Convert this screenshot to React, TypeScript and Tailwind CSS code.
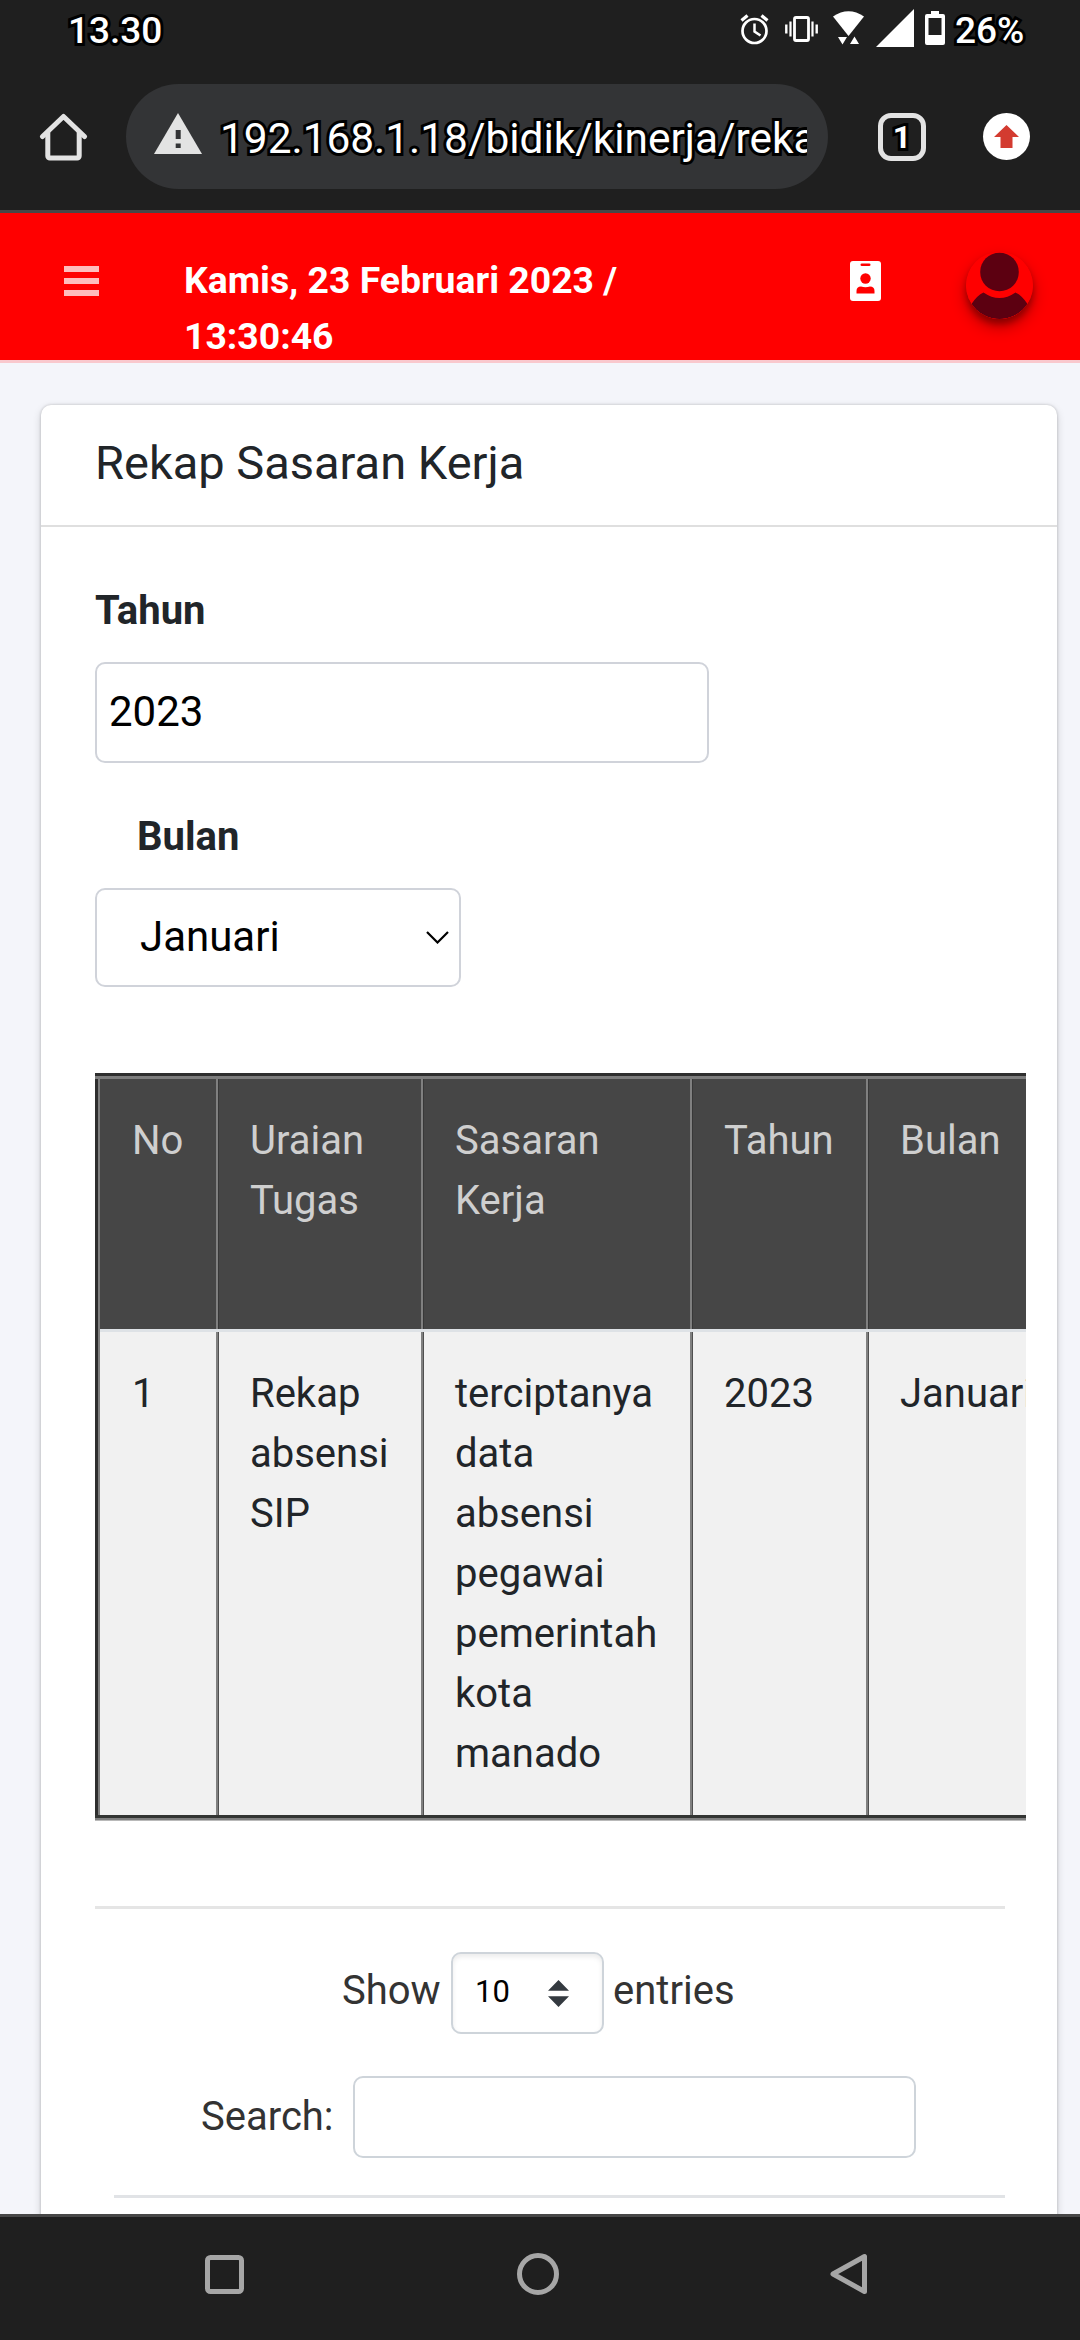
import React from "react";

const outlined =
  "text-white [-webkit-text-stroke:6px_#000] [paint-order:stroke_fill]";

function StatusBar() {
  return (
    <div className="flex h-[60px] items-start justify-between pl-[68px] pr-[56px]">
      <span className={`mt-[10px] text-[37px] leading-[42px] font-medium ${outlined}`}>13.30</span>
      <div className="flex items-start">
        <svg className="mt-[14px] mr-[16px] h-[31px] w-[29px]" viewBox="0 0 29 31" fill="none" stroke="#fff">
          <circle cx="14.5" cy="17" r="12" strokeWidth="2.7" />
          <path d="M14.5 9.5v8l6 4" strokeWidth="2.5" />
          <path d="M1.5 6.5l6-5M27.5 6.5l-6-5" strokeWidth="3.2" />
        </svg>
        <svg className="mt-[15px] mr-[15px] h-[28px] w-[33px]" viewBox="0 0 33 28" fill="none" stroke="#fff">
          <rect x="9.5" y="2.5" width="14" height="23" rx="1.5" strokeWidth="2.8" />
          <path d="M1.3 9.5v9M31.7 9.5v9" strokeWidth="2.4" />
          <path d="M5.5 6.5v15M27.5 6.5v15" strokeWidth="2.2" />
        </svg>
        <svg className="mt-[11px] mr-[12px] h-[34px] w-[31px]" viewBox="0 0 31 34" fill="#fff">
          <path d="M0 5.5Q15.5-5 31 5.500L15.500 25z" />
          <path d="M5 26h9l-4.500 7.500zM17 33h9l-4.500-7.500z" />
        </svg>
        <svg className="mt-[9px] mr-[11px] h-[38px] w-[38px]" viewBox="0 0 38 38" fill="#fff">
          <path d="M38 0v38H0z" />
        </svg>
        <svg className="mt-[11px] mr-[10px] h-[34px] w-[20px]" viewBox="0 0 20 34">
          <path fill="#fff" fillRule="evenodd" d="M6 0h8v3h4a2 2 0 0 1 2 2v27a2 2 0 0 1-2 2H2a2 2 0 0 1-2-2V5a2 2 0 0 1 2-2h4zM3.500 7v17h13V7z" />
        </svg>
        <span className={`mt-[10px] w-[69px] text-[37px] leading-[42px] font-medium ${outlined}`}>26%</span>
      </div>
    </div>
  );
}

function BrowserBar() {
  return (
    <div className="flex h-[153px] items-start border-b-3 border-[#474747] pl-[39px] pr-[50px] pt-[24px]">
      <svg className="mt-[29px] h-[48px] w-[49px]" viewBox="0 0 49 48" fill="none" stroke="#e3e3e3" strokeWidth="5" strokeLinejoin="round" strokeLinecap="round">
        <path d="M3.500 23.500L24.500 3.500l21 20" />
        <path d="M8.800 20v23a2 2 0 0 0 2 2h27.400a2 2 0 0 0 2-2V20" />
      </svg>
      <div className="ml-[38px] flex h-[105px] w-[702px] items-start rounded-full bg-[#333436] pl-[28px] pr-[21px]">
        <svg className="mt-[29px] h-[41px] w-[48px] shrink-0" viewBox="0 0 48 41">
          <path fill="#e3e3e3" d="M24 0l24 41H0z" />
          <path fill="#333436" d="M21.700 17h5v9h-5zM21.700 30.500h5v4.500h-5z" />
        </svg>
        <div className="ml-[16px] h-[105px] w-[589px] overflow-hidden pt-[30px]">
          <span className={`block whitespace-nowrap pl-[2px] text-[42.400px] leading-[50px] ${outlined}`}>
            192.168.1.18/bidik/kinerja/reka
          </span>
        </div>
      </div>
      <div className="ml-[50px] mt-[29px] flex h-[48px] w-[48px] items-center justify-center rounded-[13px] border-5 border-[#e3e3e3]">
        <span className={`text-[32px] leading-[36px] font-bold ${outlined}`}>1</span>
      </div>
      <div className="ml-[57px] mt-[29px] flex h-[47px] w-[47px] items-center justify-center rounded-full bg-white">
        <svg className="h-[23px] w-[25px]" viewBox="0 0 25 23" fill="#d33b30">
          <path d="M12.500 0L25 12h-6.500v11h-12V12H0z" />
        </svg>
      </div>
    </div>
  );
}

function SiteHeader() {
  return (
    <header className="flex h-[150px] items-start border-b-3 border-[#f9c8cd] bg-[#ff0000] pl-[64px]">
      <div className="mt-[53px] flex w-[35px] flex-col gap-[6px]">
        <i className="h-[6px] bg-[#ffbcbc]" />
        <i className="h-[6px] bg-[#ffbcbc]" />
        <i className="h-[6px] bg-[#ffbcbc]" />
      </div>
      <p className="ml-[85px] mt-[39px] w-[460px] text-[37.330px] leading-[56px] font-bold text-white">
        Kamis, 23 Februari 2023 /<br />13:30:46
      </p>
      <svg className="ml-[206px] mt-[48px] h-[40px] w-[31px]" viewBox="0 0 31 40">
        <rect width="31" height="40" rx="3" fill="#fff" />
        <g fill="#ff0000">
          <rect x="10.500" y="2.500" width="10" height="2.600" rx="1.300" />
          <circle cx="15.500" cy="17.500" r="5.200" />
          <path d="M6.500 32.500v-2.500q0-4.500 4.500-4.500 4.500 1.500 9 0 4.500 0 4.500 4.500v2.500z" />
        </g>
      </svg>
      <svg className="ml-[85px] mt-[39px] h-[67px] w-[67px] rounded-full shadow-[0_8px_16px_rgba(0,0,0,0.3),0_5px_6px_rgba(0,0,0,0.28)]" viewBox="0 0 67 67">
        <circle cx="33.500" cy="33.500" r="33.500" fill="#ff0000" />
        <g fill="#5c0011">
          <circle cx="33.500" cy="20" r="19.300" />
          <path d="M17.500 40.500Q33.500 51.500 49.500 40.500 56 43.500 61.500 52A33.500 33.500 0 0 1 5.500 52Q11 43.500 17.500 40.500z" />
        </g>
      </svg>
    </header>
  );
}

const columns = [
  { head: ["No"], body: ["1"] },
  { head: ["Uraian", "Tugas"], body: ["Rekap", "absensi", "SIP"] },
  {
    head: ["Sasaran", "Kerja"],
    body: ["terciptanya", "data", "absensi", "pegawai", "pemerintah", "kota", "manado"],
  },
  { head: ["Tahun"], body: ["2023"] },
  { head: ["Bulan"], body: ["Januari"] },
];

function Lines({ items }: { items: string[] }) {
  return (
    <>
      {items.map((t) => (
        <span key={t} className="block whitespace-nowrap">
          {t}
        </span>
      ))}
    </>
  );
}

function RecapTable() {
  const cols = "grid grid-cols-[116px_205px_269px_176px_160px]";
  return (
    <div className="mt-[86px] w-[931px] overflow-hidden text-[40px] leading-[60px]">
      <div className="h-[3px] bg-[#2e2e2e]" />
      <div className="h-[3px] bg-[#7d7d7d]" />
      <div className="flex border-l-3 border-[#2e2e2e]">
        <div className="w-[2px] bg-[#7d7d7d]" />
        <div>
          <div className={`${cols} h-[250px] bg-[#464646] text-[#cfcfcf]`}>
            {columns.map((c, i) => (
              <div
                key={i}
                className={
                  i === 0
                    ? "pl-[32px] pt-[32px]"
                    : "border-l-2 border-[#808080] pl-[32px] pt-[32px] shadow-[inset_1px_0_0_#383838]"
                }
              >
                <Lines items={c.head} />
              </div>
            ))}
          </div>
          <div className="h-[3px] bg-[#dee2e6]" />
          <div className={`${cols} h-[483px] bg-[#f1f1f1] text-[#212529]`}>
            {columns.map((c, i) => (
              <div
                key={i}
                className={
                  i === 0
                    ? "pl-[32px] pt-[32px]"
                    : "border-l-2 border-[#808080] pl-[32px] pt-[32px] shadow-[inset_1px_0_0_#505050]"
                }
              >
                <Lines items={c.body} />
              </div>
            ))}
          </div>
        </div>
      </div>
      <div className="h-[3px] bg-[#333533]" />
      <div className="h-[2px] bg-[#808080]" />
      <div className="h-[1px] bg-[#b9b9b9]" />
    </div>
  );
}

function Card() {
  return (
    <section className="ml-[41px] mt-[42px] h-[1820px] w-[1016px] rounded-t-[10px] bg-white shadow-[0_0_3px_rgba(0,0,0,0.2),0_3px_8px_rgba(0,0,0,0.16)]">
      <h1 className="h-[122px] border-b-2 border-[#dfdfdf] pl-[54px] pt-[27px] text-[47px] leading-[62px] text-[#212529]">
        Rekap Sasaran Kerja
      </h1>
      <div className="flex flex-col pl-[54px]">
        <label className="mt-[54px] h-[60px] text-[40px] leading-[60px] font-bold text-[#212529]">Tahun</label>
        <div className="mt-[21px] flex h-[101px] w-[614px] items-center rounded-[10px] border-2 border-[#d0d3da] pb-[2px] pl-[12px] text-[42px] text-black">
          2023
        </div>
        <label className="mt-[44px] h-[60px] pl-[42px] text-[40px] leading-[60px] font-bold text-[#212529]">Bulan</label>
        <div className="mt-[21px] flex h-[99px] w-[366px] items-center justify-between rounded-[10px] border-2 border-[#d0d3da] pl-[43px] pr-[10px] text-[42px] text-black">
          <span className="pb-[2px]">Januari</span>
          <svg className="h-[13px] w-[23px]" viewBox="0 0 23 13" fill="none" stroke="#000" strokeWidth="2.200">
            <path d="M1 1l10.500 10.500L22 1" />
          </svg>
        </div>
        <RecapTable />
        <div className="mt-[85px] h-[3px] w-[910px] bg-[#e5e5e5]" />
        <div className="mt-[43px] flex h-[82px] items-center pl-[247px] text-[40px] text-[#333]">
          <span className="w-[109px] -translate-y-[2px]">Show</span>
          <div className="flex h-[82px] w-[153px] items-center rounded-[10px] border-2 border-[#ced4da] pl-[22px] shadow-[inset_0_3px_5px_rgba(0,0,0,0.08)]">
            <span className="w-[73px] -translate-y-[1px] text-[31px] text-black">10</span>
            <svg className="h-[27px] w-[21px]" viewBox="0 0 21 27" fill="#343a40">
              <path d="M0 10.800L10.500 0 21 10.800zM0 16.200h21L10.500 27z" />
            </svg>
          </div>
          <span className="ml-[9px] -translate-y-[2px]">entries</span>
        </div>
        <div className="mt-[42px] flex h-[82px] items-center pl-[106px] text-[40px] text-[#333]">
          <span className="w-[152px]">Search:</span>
          <div className="h-[82px] w-[563px] rounded-[10px] border-2 border-[#ced4da]" />
        </div>
        <div className="ml-[19px] mt-[37px] h-[3px] w-[891px] bg-[#e1e3e6]" />
      </div>
    </section>
  );
}

function NavBar() {
  return (
    <nav className="flex h-[126px] items-start border-t-3 border-[#474747] bg-[#1f1f1f] pl-[205px] pt-[36px]">
      <svg className="mt-[2px] h-[39px] w-[39px]" viewBox="0 0 39 39" fill="none" stroke="#a6a6a6" strokeWidth="5">
        <rect x="2.500" y="2.500" width="34" height="34" rx="3" />
      </svg>
      <svg className="ml-[273px] h-[42px] w-[42px]" viewBox="0 0 42 42" fill="none" stroke="#a6a6a6" strokeWidth="5">
        <circle cx="21" cy="21" r="18.500" />
      </svg>
      <svg className="ml-[271px] h-[42px] w-[37px]" viewBox="0 0 37 42" fill="none" stroke="#a6a6a6" strokeWidth="5" strokeLinejoin="round">
        <path d="M34.500 3.500v35L3 21z" />
      </svg>
    </nav>
  );
}

export default function App() {
  return (
    <div className="flex h-[2340px] w-[1080px] flex-col overflow-hidden bg-[#f4f5fa] font-['Roboto',sans-serif]">
      <div className="bg-[#1f1f1f]">
        <StatusBar />
        <BrowserBar />
      </div>
      <SiteHeader />
      <main className="h-[1851px] overflow-hidden">
        <Card />
      </main>
      <NavBar />
    </div>
  );
}
